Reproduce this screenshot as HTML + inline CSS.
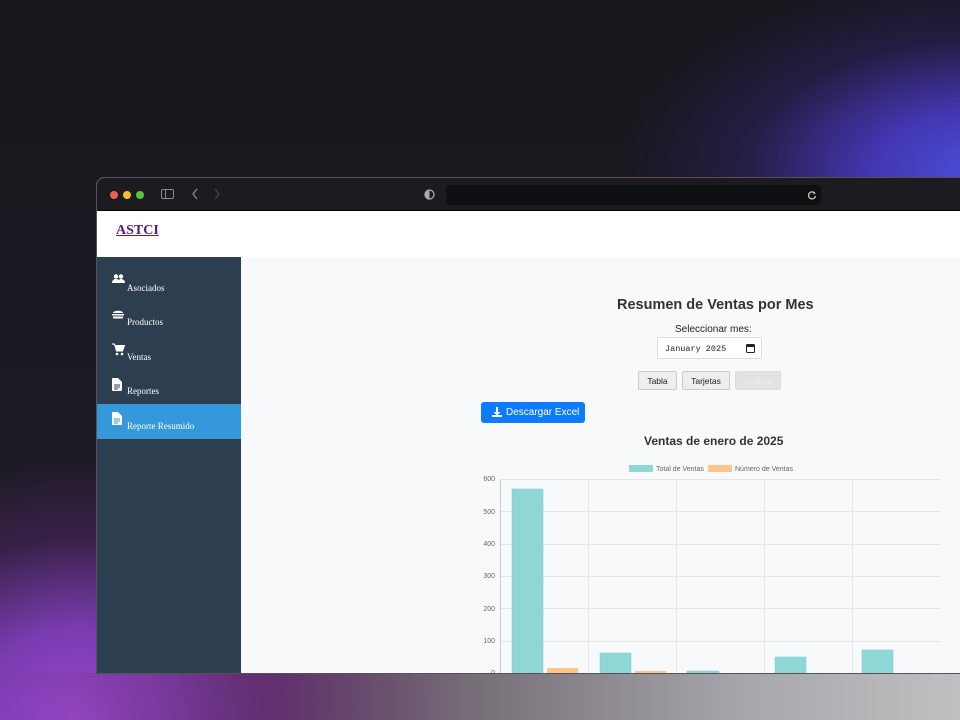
<!DOCTYPE html>
<html><head><meta charset="utf-8"><style>
*{margin:0;padding:0;box-sizing:border-box}
body{width:960px;height:720px;overflow:hidden;position:relative;font-family:"Liberation Sans",sans-serif;
background:
radial-gradient(ellipse 360px 200px at 980px 170px,#4a4fd8 0%,#4336b0 30%,rgba(60,40,140,0.35) 65%,rgba(20,20,30,0) 100%),
radial-gradient(ellipse 300px 260px at 80px 720px,#9a48d0 0%,#7a3cb0 35%,rgba(90,40,120,0.4) 70%,rgba(20,20,30,0) 100%),
linear-gradient(180deg,#17161b 0%,#1c1a24 60%,#2a2030 100%);}
.bottom{position:absolute;left:0;top:673px;width:960px;height:47px;background:linear-gradient(90deg,rgba(140,70,190,0) 0%,rgba(110,50,120,0.7) 28%,#777078 50%,#a8a8ac 78%,#c0c0c2)}
.win{position:absolute;left:96px;top:177px;width:880px;height:497px;background:#f7f9fb;border:1px solid #55525a;border-radius:8px 0 0 0;overflow:hidden}
.bar{height:33px;background:#1c1b1f;position:relative;border-bottom:1px solid #000}
.dot{position:absolute;top:13px;width:8px;height:8px;border-radius:50%}
.addr{position:absolute;left:349px;top:7px;width:375px;height:20px;background:#0f1012;border-radius:4px}
.hdr{height:46px;background:#fff;position:relative}
.hdr a{position:absolute;left:19px;top:12px;font-family:"Liberation Serif",serif;font-weight:bold;font-size:14px;color:#551a8b;text-decoration:underline}
.side{position:absolute;left:0;top:79px;width:144px;height:420px;background:#2c3e50}
.it{height:34.5px;position:relative;color:#fff;font-family:"Liberation Serif",serif;font-size:9px}
.it span{position:absolute;left:30px;bottom:8px}
.it svg{position:absolute;left:15px;top:8px}
.act{background:#3498db}
.main{position:absolute;left:144px;top:79px;right:0;bottom:0}
h2{position:absolute;left:376px;top:40px;font-size:14.5px;color:#333;font-weight:bold}
.lbl{position:absolute;left:434px;top:67px;font-size:10px;color:#222}
.inp{position:absolute;left:416px;top:80px;width:105px;height:22px;background:#fff;border:1px solid #ddd;border-radius:2px;font-family:"Liberation Mono",monospace;font-size:8.5px;padding:6px 0 0 7px;color:#222}
.btn{position:absolute;top:114px;height:19px;background:#eee;border:1px solid #ccc;border-radius:2px;font-size:8.5px;color:#222;text-align:center;padding-top:4px}
.xl{position:absolute;left:240px;top:145px;width:104px;height:21px;background:#0d7bff;border-radius:3px;color:#fff;font-size:10px;padding:5px 0 0 25px}
h3{position:absolute;left:403px;top:177px;font-size:12px;color:#333}
</style></head><body>
<div class="bottom"></div>
<div class="win">
 <div class="bar">
  <div class="dot" style="left:13px;background:#ee5f57"></div>
  <div class="dot" style="left:26px;background:#f4bd31"></div>
  <div class="dot" style="left:39px;background:#5cc43e"></div>
  <svg style="position:absolute;left:64px;top:11px" width="14" height="11"><rect x="0.5" y="0.5" width="12" height="9" rx="1.5" fill="none" stroke="#8a8a8e"/><line x1="4.5" y1="1" x2="4.5" y2="9" stroke="#8a8a8e"/></svg>
  <svg style="position:absolute;left:94px;top:10px" width="8" height="12"><path d="M6 1L2 6l4 5" fill="none" stroke="#8a8a8e" stroke-width="1.3"/></svg>
  <svg style="position:absolute;left:116px;top:10px" width="8" height="12"><path d="M2 1l4 5-4 5" fill="none" stroke="#444" stroke-width="1.3"/></svg>
  <svg style="position:absolute;left:327px;top:11px" width="11" height="11"><circle cx="5.5" cy="5.5" r="4.5" fill="none" stroke="#aaa" stroke-width="1.3"/><path d="M5.5 1a4.5 4.5 0 0 0 0 9z" fill="#aaa"/></svg>
  <div class="addr"><svg style="position:absolute;left:361px;top:5px" width="10" height="10"><path d="M8 3.5A3.5 3.5 0 1 0 8.5 6" fill="none" stroke="#ccc" stroke-width="1.2"/><path d="M6.5 1.5L8.5 3.5 6.5 4.5" fill="#ccc"/></svg></div>
 </div>
 <div class="hdr"><a>ASTCI</a></div>
 <div class="side">
  <div style="height:9px"></div>
  <div class="it"><svg width="13" height="10"><circle cx="4" cy="2.5" r="2.2" fill="#fff"/><circle cx="9" cy="2.5" r="2.2" fill="#fff"/><path d="M0 9c0-3 2-4 4-4s4 1 4 4zM6 9c0-3 1.5-4 3-4s4 1 4 4z" fill="#fff"/></svg><span>Asociados</span></div>
  <div class="it"><svg width="12" height="10"><path d="M1 4c0-3 10-3 10 0z" fill="#fff"/><rect x="0" y="5" width="12" height="1.5" fill="#fff"/><path d="M1 7.5h10v1c0 1-1 1-1 1H2s-1 0-1-1z" fill="#fff"/></svg><span>Productos</span></div>
  <div class="it"><svg width="13" height="13"><path d="M0 1h2.5l2 7h6l2-5.5H3.5" fill="#fff" stroke="#fff" stroke-width="1"/><circle cx="5" cy="11" r="1.3" fill="#fff"/><circle cx="10" cy="11" r="1.3" fill="#fff"/></svg><span>Ventas</span></div>
  <div class="it"><svg width="10" height="13"><path d="M0 1a1 1 0 0 1 1-1h5l4 4v8a1 1 0 0 1-1 1H1a1 1 0 0 1-1-1z" fill="#fff"/><path d="M2 7h6M2 9h6M2 11h4" stroke="#2c3e50" stroke-width="0.9"/></svg><span>Reportes</span></div>
  <div class="it act"><svg width="10" height="13"><path d="M0 1a1 1 0 0 1 1-1h5l4 4v8a1 1 0 0 1-1 1H1a1 1 0 0 1-1-1z" fill="#fff"/><path d="M2 7h6M2 9h6M2 11h4" stroke="#3498db" stroke-width="0.9"/></svg><span>Reporte Resumido</span></div>
 </div>
 <div class="main">
  <h2>Resumen de Ventas por Mes</h2>
  <div class="lbl">Seleccionar mes:</div>
  <div class="inp">January 2025<svg style="position:absolute;right:6px;top:6px" width="9" height="9"><rect x="0.5" y="0.5" width="8" height="8" rx="1" fill="none" stroke="#222"/><rect x="0.5" y="0.5" width="8" height="2.5" fill="#222"/></svg></div>
  <div class="btn" style="left:397px;width:39px">Tabla</div>
  <div class="btn" style="left:441px;width:48px">Tarjetas</div>
  <div class="btn" style="left:494px;width:46px;background:#e2e2e2;border-color:#ddd;color:#eee">Gráfico</div>
  <div class="xl"><svg style="position:absolute;left:11px;top:5px" width="10" height="10"><path d="M4 0h2v5h2.5L5 8.5 1.5 5H4z" fill="#fff"/><rect x="0" y="8" width="10" height="2" fill="#fff"/></svg>Descargar Excel</div>
  <h3>Ventas de enero de 2025</h3>
 </div>
 <svg style="position:absolute;left:0;top:0" width="880" height="497">
  <g font-family="Liberation Sans" font-size="7" fill="#666">
   <rect x="532" y="287" width="24" height="7" fill="#8fd6d6"/><text x="559" y="293">Total de Ventas</text>
   <rect x="611" y="287" width="24" height="7" fill="#ffc48a"/><text x="638" y="293">Número de Ventas</text>
   <g text-anchor="end"><text x="398" y="303">600</text><text x="398" y="336">500</text><text x="398" y="368">400</text><text x="398" y="400">300</text><text x="398" y="433">200</text><text x="398" y="465">100</text><text x="398" y="497">0</text></g>
  </g>
  <g stroke="#e4e6e9" stroke-width="1">
   <line x1="404" y1="301.5" x2="844" y2="301.5"/><line x1="404" y1="333.5" x2="844" y2="333.5"/><line x1="404" y1="366.5" x2="844" y2="366.5"/><line x1="404" y1="398.5" x2="844" y2="398.5"/><line x1="404" y1="430.5" x2="844" y2="430.5"/><line x1="404" y1="463.5" x2="844" y2="463.5"/>
   <line x1="491.5" y1="301" x2="491.5" y2="497"/><line x1="579.5" y1="301" x2="579.5" y2="497"/><line x1="667.5" y1="301" x2="667.5" y2="497"/><line x1="755.5" y1="301" x2="755.5" y2="497"/>
   <line x1="403.5" y1="301" x2="403.5" y2="497" stroke="#ccc"/>
  </g>
  <g fill="#8fd6d6" stroke="#7ccccc" stroke-width="0.5">
   <rect x="415" y="311" width="31" height="186"/><rect x="503" y="475" width="31" height="22"/><rect x="590" y="493" width="32" height="4"/><rect x="678" y="479" width="31" height="18"/><rect x="765" y="472" width="31" height="25"/>
  </g>
  <g fill="#ffc48a"><rect x="450" y="490" width="31" height="7"/><rect x="538" y="493" width="31" height="4"/><rect x="713" y="495" width="31" height="2"/></g>
 </svg>
</div>
</body></html>
